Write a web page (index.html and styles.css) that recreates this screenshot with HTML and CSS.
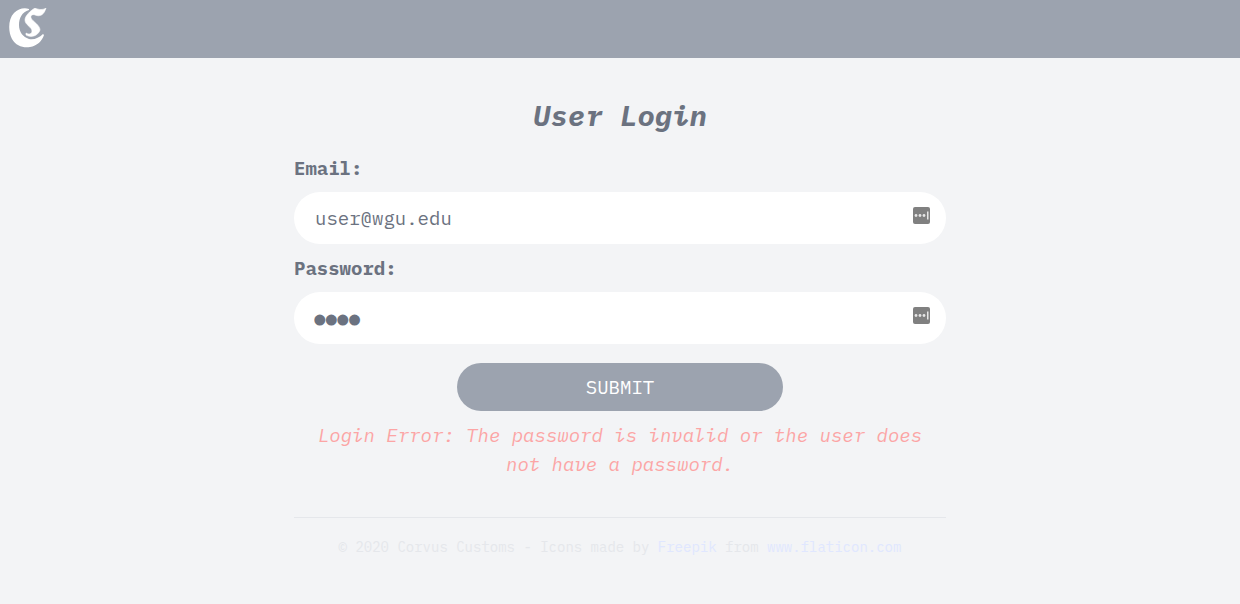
FILE: index.html
```html
<!DOCTYPE html>
<html lang="en">
<head>
  <meta charset="utf-8">
  <meta name="viewport" content="width=device-width, initial-scale=1">
  <title>User Login</title>
  <link rel="stylesheet" href="styles.css">
</head>
<body>
  <header class="topbar">
    <a class="brand" href="#" aria-label="Corvus Customs">
      <svg viewBox="0 0 38 40" aria-hidden="true">
        <path d="M20 1C15-1 9 1 5 5C-1 11-1 24 3 31C7 38 14 40 21 39C28 38 33 33 35 27L34 26C30 30 25 32 20 31C14 29 10 24 10 17C10 10 13 4 20 2Z"/>
        <path d="M37 0C34 2 30 2 26 0C21 3 16 8 16 12C16 17 23 19 23 23C23 26 20 27 17 25L17 27C22 30 29 28 31 22C31 17 23 13 22 10C21 7 24 6 26 7C31 9 35 7 37 0Z" stroke="#fff" stroke-width=".6"/>
      </svg>
    </a>
  </header>
  <main class="page">
    <h1 class="title">User Login</h1>
    <form class="login">
      <label class="label" for="email">Email:</label>
      <div class="field">
        <input class="input" id="email" type="email" value="user@wgu.edu">
        <svg class="field-icon" viewBox="0 0 17 17" aria-hidden="true"><rect width="17" height="17" rx="2" fill="#808080"/><g fill="#e5e5e5"><circle cx="3" cy="8.5" r="1.4"/><circle cx="7" cy="8.5" r="1.4"/><circle cx="11" cy="8.5" r="1.4"/><path d="M14 4.500h1.500v8H14z"/></g></svg>
      </div>
      <label class="label" for="password">Password:</label>
      <div class="field">
        <input class="input input-password" id="password" type="password" value="pass">
        <svg class="field-icon" viewBox="0 0 17 17" aria-hidden="true"><rect width="17" height="17" rx="2" fill="#808080"/><g fill="#e5e5e5"><circle cx="3" cy="8.5" r="1.4"/><circle cx="7" cy="8.5" r="1.4"/><circle cx="11" cy="8.5" r="1.4"/><path d="M14 4.500h1.500v8H14z"/></g></svg>
      </div>
      <button class="submit" type="submit">SUBMIT</button>
      <p class="error" role="alert">Login Error: The password is invalid or the user does not have a password.</p>
    </form>
    <footer class="footer">© 2020 Corvus Customs - Icons made by <a href="#">Freepik</a> from <a href="#">www.flaticon.com</a></footer>
  </main>
</body>
</html>
```

FILE: styles.css
```css
* {
  box-sizing: border-box;
}

body {
  margin: 0;
  background: #f3f4f6;
  color: #6b7280;
  font: 19px/29px "IBM Plex Mono", "Liberation Mono", monospace;
}

.topbar {
  display: flex;
  padding: 8px 9px 10px;
  background: #9ca3af;
}

.brand {
  display: block;
  color: #fff;
}

.brand svg {
  display: block;
  width: 38px;
  height: 40px;
  fill: currentColor;
}

.page {
  max-width: 652px;
  margin: 0 auto;
  padding: 36px 0;
}

.title {
  margin: 0 0 17px;
  font-size: 29px;
  line-height: 43px;
  font-style: italic;
  text-align: center;
}

.login {
  display: flex;
  flex-direction: column;
}

.label {
  margin-bottom: 9px;
  font-weight: 700;
}

.field {
  position: relative;
  margin-bottom: 10px;
}

.input {
  display: block;
  width: 100%;
  height: 52px;
  padding: 0 48px 0 21px;
  border: 0;
  border-radius: 26px;
  outline: 0;
  background: #fff;
  color: inherit;
  font: inherit;
}

.input-password {
  padding-top: 6px;
  padding-left: 20px;
  font-family: "Liberation Serif", serif;
  font-size: 33px;
  -webkit-text-stroke: 3px #6b7280;
}

.field-icon {
  position: absolute;
  top: 15px;
  right: 16px;
  width: 17px;
  height: 17px;
}

.submit {
  align-self: center;
  width: 50%;
  height: 48px;
  margin: 9px 0 10px;
  border: 0;
  border-radius: 24px;
  background: #9ca3af;
  color: #fff;
  font: inherit;
}

.error {
  margin: 0;
  padding: 0 16px;
  color: #fca5a5;
  font-style: italic;
  text-align: center;
}

.footer {
  margin-top: 38px;
  padding-top: 18px;
  border-top: 1px solid #e5e7eb;
  color: #e5e7eb;
  font-size: 14px;
  line-height: 22px;
  text-align: center;
}

.footer a {
  color: #e0e7ff;
  text-decoration: none;
}
```
